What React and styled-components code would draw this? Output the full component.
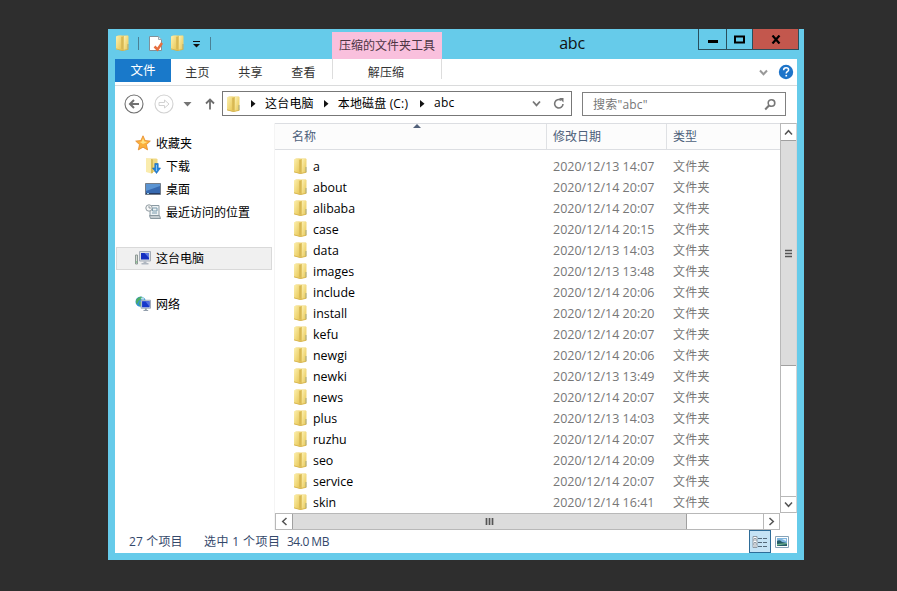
import React from "react";
import styled, { createGlobalStyle } from "styled-components";

const GlobalStyle = createGlobalStyle`
  * {
    box-sizing: border-box;
  }

  body {
    margin: 0;
    background: #2e2e2e;
    font-family: "Open Sans", "Noto Sans CJK SC", sans-serif;
    font-size: 12px;
    color: #111;
    overflow: hidden;
  }

  svg {
    display: block;
    flex-shrink: 0;
  }
`;

const Desktop = styled.div`
  height: 591px;
  padding: 29px 93px 31px 108px;
`;

const Window = styled.div`
  height: 531px;
  padding: 0 7px 7px;
  background: #66cbea;
  display: flex;
  flex-direction: column;
`;

const TitleBar = styled.div`
  height: 30px;
  display: flex;
  margin-right: -2px;
`;

const QuickAccess = styled.div`
  width: 217px;
  display: flex;
  align-items: center;
  padding-bottom: 2px;
`;

const Line = styled.div`
  width: 1px;
  height: 13px;
  background: #4a8196;
  margin: 0 ${(props) => props.$right || 0}px 0 ${(props) => props.$left}px;
`;

const Spacer = styled.div`
  width: ${(props) => props.$width}px;
  flex-shrink: 0;
`;

const ContextTab = styled.div`
  width: 110px;
  height: 27px;
  margin-top: 3px;
  line-height: 27px;
  background: #f9c0dd;
  color: #4d3544;
  text-align: center;
`;

const Title = styled.div`
  width: 256px;
  padding-left: 4px;
  line-height: 29px;
  font-size: 16px;
  text-align: center;
  letter-spacing: -0.2px;
`;

const WindowButton = styled.div`
  width: ${(props) => props.$width}px;
  height: 21px;
  border: 1px solid #294f5d;
  border-top: none;
  border-left-width: ${(props) => (props.$first ? 1 : 0)}px;
  background: ${(props) => props.$color || "transparent"};
  display: flex;
  align-items: center;
  justify-content: center;
`;

const Client = styled.div`
  height: 494px;
  background: #fff;
  display: flex;
  flex-direction: column;
`;

const Ribbon = styled.div`
  height: 27px;
  border-bottom: 1px solid #dadbdc;
  display: flex;
`;

const FileTab = styled.div`
  width: 56px;
  height: 23px;
  line-height: 23px;
  background: #1979ca;
  color: #fff;
  text-align: center;
  font-size: 12.5px;
`;

const Tab = styled.div`
  width: 53px;
  line-height: 27px;
  text-align: center;
  color: #333;
  letter-spacing: 0.2px;
`;

const ContextRibbonTab = styled(Tab)`
  width: 110px;
  height: 20px;
  margin-left: 2px;
  padding-right: 2px;
  border: 1px solid #ddd;
  border-top: none;
  border-bottom: none;
`;

const RibbonTools = styled.div`
  margin-left: auto;
  padding-right: 3px;
  display: flex;
  align-items: center;
  gap: 10px;
`;

const AddressRow = styled.div`
  height: 37px;
  padding-left: 9px;
  padding-bottom: 1px;
  display: flex;
  align-items: center;
`;

const AddressBar = styled.div`
  width: 350px;
  height: 25px;
  margin: 0 10px 1px 5px;
  border: 1px solid #777;
  padding: 0 6px 0 3px;
  display: flex;
  align-items: center;
  color: #000;
`;

const Crumb = styled.span`
  padding: 0 ${(props) => props.$right || 10}px 2px 9px;
  white-space: nowrap;
  letter-spacing: ${(props) => props.$spacing || 0}px;
`;

const SearchBox = styled.div`
  width: 204px;
  height: 24px;
  padding: 0 8px 0 10px;
  border: 1px solid #808080;
  color: #777;
  display: flex;
  align-items: center;
  justify-content: space-between;
`;

const SearchText = styled.span`
  padding-bottom: 1px;
  letter-spacing: 0.2px;
`;

const Main = styled.div`
  height: 407px;
  display: flex;
`;

const Sidebar = styled.div`
  width: 160px;
  padding-top: 9px;
  border-right: 1px solid #f4f4f4;
`;

const NavItem = styled.div`
  height: 23px;
  margin: 0 2px 0 1px;
  margin-bottom: ${(props) => (props.$last ? 23 : 0)}px;
  padding-left: ${(props) => (props.$child ? 28 : 18)}px;
  padding-bottom: 1px;
  border: 1px solid ${(props) => (props.$selected ? "#d9d9d9" : "transparent")};
  background: ${(props) => (props.$selected ? "#f0f0f0" : "transparent")};
  color: #000;
  display: flex;
  align-items: center;
  gap: 5px;
  white-space: nowrap;
`;

const Content = styled.div`
  width: 505px;
`;

const Header = styled.div`
  height: 27px;
  border: 1px solid #dcdee2;
  border-left: none;
  border-right: none;
  background: #fcfcfc;
  color: #4c607a;
  display: flex;
`;

const HeaderCell = styled.div`
  width: ${(props) => props.$width}px;
  padding-left: ${(props) => props.$pad}px;
  line-height: 26px;
  border-right: ${(props) => (props.$last ? "none" : "1px solid #dfe1e4")};
  display: flex;
`;

const SortMark = styled.svg`
  margin-left: 97px;
`;

const FileList = styled.div`
  height: 363px;
  padding-top: 6px;
  overflow: hidden;
`;

const FileRow = styled.div`
  height: 21px;
  padding-left: 18px;
  display: flex;
  align-items: center;
  font-size: 12.5px;
  color: #777;

  svg {
    margin-bottom: 2px;
  }
`;

const FileName = styled.div`
  width: 245px;
  padding-left: 5px;
  font-size: 12.4px;
  color: #000;
`;

const FileDate = styled.div`
  width: 120px;
`;

const FileType = styled.div`
  font-size: 12px;
  letter-spacing: 0.2px;
  padding-bottom: 1px;
`;

const HScroll = styled.div`
  height: 17px;
  border: 1px solid #b8b8b8;
  display: flex;
`;

const VScroll = styled.div`
  width: 17px;
  height: 390px;
  border: 1px solid #b8b8b8;
  border-right-color: #d5d5d5;
`;

const ScrollButton = styled.div`
  width: ${(props) => (props.$h ? 16 : 15)}px;
  height: ${(props) => (props.$h ? 15 : 16)}px;
  margin-left: ${(props) => (props.$h && props.$end ? "auto" : 0)};
  border-left: ${(props) => (props.$h && props.$end ? "1px solid #b8b8b8" : "none")};
  border-top: ${(props) => (!props.$h && props.$end ? "1px solid #b8b8b8" : "none")};
  display: flex;
  align-items: center;
  justify-content: center;
`;

const Thumb = styled.div`
  width: ${(props) => props.$width}px;
  height: ${(props) => props.$height}px;
  margin-bottom: ${(props) => props.$gap || 0}px;
  background: #dcdcdc;
  border: 1px solid #a0a0a0;
  border-width: ${(props) => (props.$h ? "0 1px" : "1px 0")};
  display: flex;
  align-items: center;
  justify-content: center;
`;

const StatusBar = styled.div`
  height: 23px;
  padding-left: 14px;
  display: flex;
  align-items: center;
  color: #34486b;
  white-space: nowrap;
`;

const StatusText = styled.div`
  width: ${(props) => props.$width}px;
  padding-bottom: 1px;
  font-size: 12px;
  letter-spacing: ${(props) => props.$spacing || 0}px;
`;

const ViewButtons = styled.div`
  margin-left: auto;
  padding-right: 8px;
  display: flex;
  align-items: center;
  gap: 5px;
`;

const DetailsButton = styled.div`
  width: 22px;
  height: 23px;
  margin-right: -1px;
  border: 1px solid #2e6c98;
  background: #c5e3f5;
  display: flex;
  align-items: center;
  justify-content: center;
`;

const FolderIcon = () => (
  <svg width="15" height="18" viewBox="0 0 15 18">
    <defs>
      <linearGradient id="folderFront" x1="0" y1="0" x2="1" y2="1">
        <stop offset="0" stopColor="#fcf0b0" />
        <stop offset="1" stopColor="#e8c755" />
      </linearGradient>
    </defs>
    <path d="M1.500 3Q1.500 1.500 3 1.500h9.500q1 0 1 1V15l-5 1.500-7-1z" fill="#efd67a" />
    <path d="M1 3Q1 2 2 2l4.500-.5v15L1 15z" fill="url(#folderFront)" />
    <path d="M6.500 2.500L9 2v14.500H6.500z" fill="#e2c563" />
    <path d="M7 3v12.500" stroke="#c9a53f" strokeWidth=".8" />
    <path d="M9 2l4-.2V15.500L9 16.500z" fill="url(#folderFront)" />
    <path d="M13 10v5" stroke="#939d80" strokeWidth=".8" />
    <path d="M1 14.800l6 1.800 6.500-1.300" fill="none" stroke="#cfab43" strokeWidth=".7" />
  </svg>
);

const PropertiesIcon = () => (
  <svg width="16" height="17" viewBox="0 0 16 17">
    <path d="M1.500 1.500h9l3 3v11h-12z" fill="#fff" stroke="#819099" />
    <path d="M10.500 1.500v3h3" fill="#dfe7eb" stroke="#9aa8b0" />
    <path d="M6.500 11.500l3 3 4.500-6.500" fill="none" stroke="#e66e3f" strokeWidth="2.500" />
  </svg>
);

const CustomizeIcon = () => (
  <svg width="9" height="9" viewBox="0 0 9 9">
    <path d="M1 2.500h7" stroke="#111" />
    <path d="M1 5h7L4.500 8.500z" fill="#111" />
  </svg>
);

const Chevron = ({ turn = 0, color = "#555", size = 9, weight = 1.5 }) => (
  <svg width={size} height={size} viewBox="0 0 9 9">
    <path
      d="M1 2.500l3.500 3.800L8 2.500"
      fill="none"
      stroke={color}
      strokeWidth={weight}
      transform={`rotate(${turn} 4.5 4.5)`}
    />
  </svg>
);

const HelpIcon = () => (
  <svg width="16" height="16" viewBox="0 0 16 16">
    <circle cx="8" cy="8" r="7.200" fill="#1d74c9" />
    <path
      d="M5.600 6.200q0-2.400 2.500-2.400t2.500 2.100c0 1.500-2.400 1.700-2.400 3.700"
      fill="none"
      stroke="#fff"
      strokeWidth="1.500"
    />
    <path d="M7.400 10.900h1.700v1.600H7.400z" fill="#fff" />
  </svg>
);

const ArrowCircle = ({ color, forward, weight }) => (
  <svg width="20" height="20" viewBox="0 0 20 20">
    <circle cx="10" cy="10" r="9" fill="none" stroke={color} strokeWidth="1.100" />
    {forward ? (
      <path
        d="M5 8.500h5.500V6l4.500 4-4.500 4v-2.500H5z"
        fill="none"
        stroke={color}
        strokeWidth={weight}
      />
    ) : (
      <path
        d="M15 10H6.500M10 6l-4 4 4 4"
        fill="none"
        stroke={color}
        strokeWidth={weight}
      />
    )}
  </svg>
);

// caret and up arrow between the round buttons and the address bar
const HistoryIcons = () => (
  <svg width="43" height="20" viewBox="0 0 43 20">
    <path d="M9.500 8h8l-4 4.500z" fill="#757575" />
    <path d="M36 15.500V5.500M32 9.500l4-4 4 4" fill="none" stroke="#6e6e6e" strokeWidth="1.800" />
  </svg>
);

const CrumbArrow = () => (
  <svg width="5" height="8" viewBox="0 0 5 8">
    <path d="M0 0l4.500 3.800L0 7.500z" fill="#111" />
  </svg>
);

const AddressTools = styled.div`
  margin-left: auto;
  display: flex;
  align-items: center;
  gap: 12px;
`;

const RefreshIcon = () => (
  <svg width="12" height="13" viewBox="0 0 12 13">
    <path d="M8 3.200A4.200 4.200 0 1 0 10 7" fill="none" stroke="#777" strokeWidth="1.600" />
    <path d="M6 1h4.500v4.500z" fill="#777" />
  </svg>
);

const SearchIcon = () => (
  <svg width="13" height="13" viewBox="0 0 13 13">
    <circle cx="7.500" cy="5" r="3.300" fill="none" stroke="#777" strokeWidth="1.600" />
    <path d="M5.200 7.300L1.200 11.500" stroke="#777" strokeWidth="2" />
  </svg>
);

const StarIcon = () => (
  <svg width="16" height="16" viewBox="0 0 16 16">
    <path
      d="M8 .8l2.100 4.700 5.200.6-3.900 3.500 1.200 5.300L8 12.200l-4.700 2.700 1.200-5.300L.7 6.100l5.200-.6z"
      fill="#fbb03c"
      stroke="#e58a2c"
      strokeWidth=".8"
    />
    <path d="M8 3l1.300 3.500 3 .5L8 9 4.800 7l2-.6z" fill="#ffe287" />
  </svg>
);

const DownloadIcon = () => (
  <svg width="16" height="18" viewBox="0 0 16 18">
    <path d="M1 1.500h10.500l1 1V15H1z" fill="#f1da84" />
    <path d="M1 1.500l5 .5v14.500L1 15z" fill="#faecad" />
    <path d="M6 2l2 .5V16l-2 .5z" fill="#d9be5b" />
    <path d="M9.800 6.500h3.400V11H15.500L11.500 16.500 7.500 11h2.300z" fill="#2684dc" stroke="#1766b4" strokeWidth=".6" />
    <path d="M11.500 8v6" stroke="#83c4f7" />
  </svg>
);

const DesktopIcon = () => (
  <svg width="16" height="14" viewBox="0 0 16 14">
    <path d="M.5 1.500h15v11H.5z" fill="#3769b0" stroke="#747d89" />
    <path d="M1 2h14v2L1 9z" fill="#5b94d2" />
    <path d="M1 11.500h14" stroke="#263a61" />
    <path d="M2 11.500h2" stroke="#9bd0ec" />
  </svg>
);

const RecentIcon = () => (
  <svg width="16" height="16" viewBox="0 0 16 16">
    <path d="M5 1.500h9v10H5z" fill="#edf2f4" stroke="#8b9aa3" />
    <path d="M7.500 4h4.500v3H7.500zM7 9h5" fill="none" stroke="#7a9bad" />
    <path d="M4.500 11.500h10l1 3H5.500z" fill="#c4ccd0" stroke="#89979f" />
    <circle cx="4" cy="4" r="3.200" fill="#f7f8f8" stroke="#909ba1" />
    <path d="M4 2v2h2" fill="none" stroke="#7b878e" strokeWidth=".8" />
  </svg>
);

const ComputerIcon = () => (
  <svg width="16" height="16" viewBox="0 0 16 16">
    <path d="M.5 5h2v9h-2z" fill="#d3d9d3" stroke="#8e9995" />
    <path d="M4.500 1.500h11v9.500h-11z" fill="#d9dfe5" stroke="#a5adb7" />
    <path d="M6 3h8v6.500H6z" fill="#142fc0" />
    <path d="M9.500 3H14v5z" fill="#5b78e2" />
    <path d="M8.500 11.500h3V13h2v1.500H6.500V13h2z" fill="#aeb6bf" />
    <path d="M1 12h1" stroke="#55bb60" />
  </svg>
);

const NetworkIcon = () => (
  <svg width="16" height="16" viewBox="0 0 17 17">
    <circle cx="6" cy="6" r="5.500" fill="#3192d3" />
    <path d="M2 3q3-3 6-2L6 4 4 5 2 9Q0 6 2 3zM5 6l3 1-2 4-2-2z" fill="#4dae62" />
    <path d="M6 2l3-1 1 3H7z" fill="#b8e1ee" />
    <path d="M6.500 4.500h10v8.500h-10z" fill="#dfe4ec" stroke="#9ca8b8" />
    <path d="M7.500 5.500h8V12h-8z" fill="#1737cb" />
    <path d="M11 5.500h4.500v6z" fill="#536fdf" />
    <path d="M10.500 13h2v2h1.500v1H9v-1h1.500z" fill="#929eab" />
  </svg>
);

const GripIcon = ({ vertical }) => (
  <svg width="9" height="9" viewBox="0 0 9 9">
    <path
      d="M1 1.500h7M1 4.500h7M1 7.500h7"
      stroke="#555"
      strokeWidth="1.700"
      transform={vertical ? "rotate(90 4.5 4.5)" : undefined}
    />
  </svg>
);

const DetailsIcon = () => (
  <svg width="16" height="14" viewBox="0 0 16 14">
    <path d="M1 1.500h4v11H1zM1 5h4M1 9h4" fill="#fff" stroke="#7c8790" strokeWidth=".8" />
    <path d="M2.500 3.500h1M2.500 7.500h1M2.500 11h1" stroke="#253c50" />
    <path d="M6 3.500h4M11 3.500h4M6 7.500h4M11 7.500h4M6 11.500h4M11 11.500h4" stroke="#55697a" />
  </svg>
);

const ThumbnailIcon = () => (
  <svg width="14" height="12" viewBox="0 0 14 12">
    <path d="M.5.500h13v11H.5z" fill="#fff" stroke="#87a3b8" />
    <path d="M2 2h10v8H2z" fill="#7fb6df" />
    <path d="M2 5q3-2 5 1l5 1v3H2z" fill="#245c68" />
    <path d="M2 8l10-1v1L2 9.500z" fill="#73b790" />
    <path d="M7 3h4v2z" fill="#e5f1fa" />
  </svg>
);

const files = [
  { name: "a", date: "2020/12/13 14:07" },
  { name: "about", date: "2020/12/14 20:07" },
  { name: "alibaba", date: "2020/12/14 20:07" },
  { name: "case", date: "2020/12/14 20:15" },
  { name: "data", date: "2020/12/13 14:03" },
  { name: "images", date: "2020/12/13 13:48" },
  { name: "include", date: "2020/12/14 20:06" },
  { name: "install", date: "2020/12/14 20:20" },
  { name: "kefu", date: "2020/12/14 20:07" },
  { name: "newgi", date: "2020/12/14 20:06" },
  { name: "newki", date: "2020/12/13 13:49" },
  { name: "news", date: "2020/12/14 20:07" },
  { name: "plus", date: "2020/12/13 14:03" },
  { name: "ruzhu", date: "2020/12/14 20:07" },
  { name: "seo", date: "2020/12/14 20:09" },
  { name: "service", date: "2020/12/14 20:07" },
  { name: "skin", date: "2020/12/14 16:41" },
];

const navItems = [
  { title: "收藏夹", icon: <StarIcon /> },
  { title: "下载", icon: <DownloadIcon />, child: true },
  { title: "桌面", icon: <DesktopIcon />, child: true },
  { title: "最近访问的位置", icon: <RecentIcon />, child: true, last: true },
  { title: "这台电脑", icon: <ComputerIcon />, selected: true, last: true },
  { title: "网络", icon: <NetworkIcon /> },
];

const WindowTitle = () => (
  <TitleBar>
    <QuickAccess>
      <FolderIcon />
      <Line $left={8} $right={9} />
      <PropertiesIcon />
      <Spacer $width={6} />
      <FolderIcon />
      <Spacer $width={7} />
      <CustomizeIcon />
      <Line $left={9} />
    </QuickAccess>
    <ContextTab>压缩的文件夹工具</ContextTab>
    <Title>abc</Title>
    <WindowButton $width={29} $first>
      <svg width="12" height="12" viewBox="0 0 12 12">
        <path d="M1 7h10v3H1z" fill="#000" />
      </svg>
    </WindowButton>
    <WindowButton $width={26}>
      <svg width="11" height="9" viewBox="0 0 11 9">
        <path d="M1 1.500h9v6H1z" fill="none" stroke="#000" strokeWidth="2" />
      </svg>
    </WindowButton>
    <WindowButton $width={46} $color="#c3574d">
      <svg width="10" height="9" viewBox="0 0 10 9">
        <path d="M1.500 .5l7 8M8.500 .5l-7 8" stroke="#000" strokeWidth="2.200" />
      </svg>
    </WindowButton>
  </TitleBar>
);

const App = () => {
  return (
    <Desktop>
      <GlobalStyle />
      <Window>
        <WindowTitle />
        <Client>
          <Ribbon>
            <FileTab>文件</FileTab>
            <Tab>主页</Tab>
            <Tab>共享</Tab>
            <Tab>查看</Tab>
            <ContextRibbonTab>解压缩</ContextRibbonTab>
            <RibbonTools>
              <Chevron color="#999" weight={2} />
              <HelpIcon />
            </RibbonTools>
          </Ribbon>
          <AddressRow>
            <ArrowCircle color="#717171" weight={2} />
            <Spacer $width={10} />
            <ArrowCircle color="#d2d2d2" weight={1} forward />
            <HistoryIcons />
            <AddressBar>
              <FolderIcon />
              <Spacer $width={10} />
              <CrumbArrow />
              <Crumb $spacing={0.2}>这台电脑</Crumb>
              <CrumbArrow />
              <Crumb $spacing={0.15} $right={12}>
                本地磁盘 (C:)
              </Crumb>
              <CrumbArrow />
              <Crumb $spacing={0.2}>abc</Crumb>
              <AddressTools>
                <Chevron color="#777" weight={1.8} />
                <RefreshIcon />
              </AddressTools>
            </AddressBar>
            <SearchBox>
              <SearchText>搜索"abc"</SearchText>
              <SearchIcon />
            </SearchBox>
          </AddressRow>
          <Main>
            <Sidebar>
              {navItems.map((item) => (
                <NavItem
                  key={item.title}
                  $child={item.child}
                  $last={item.last}
                  $selected={item.selected}
                >
                  {item.icon}
                  {item.title}
                </NavItem>
              ))}
            </Sidebar>
            <Content>
              <Header>
                <HeaderCell $width={272} $pad={17}>
                  名称
                  <SortMark width="8" height="5" viewBox="0 0 8 5">
                    <path d="M4 0l4 4H0z" fill="#52617a" />
                  </SortMark>
                </HeaderCell>
                <HeaderCell $width={120} $pad={6}>
                  修改日期
                </HeaderCell>
                <HeaderCell $width={113} $pad={6} $last>
                  类型
                </HeaderCell>
              </Header>
              <FileList>
                {files.map((file) => (
                  <FileRow key={file.name}>
                    <FolderIcon />
                    <FileName>{file.name}</FileName>
                    <FileDate>{file.date}</FileDate>
                    <FileType>文件夹</FileType>
                  </FileRow>
                ))}
              </FileList>
              <HScroll>
                <ScrollButton $h>
                  <Chevron turn={90} />
                </ScrollButton>
                <Thumb $h $width={395} $height={15}>
                  <GripIcon vertical />
                </Thumb>
                <ScrollButton $h $end>
                  <Chevron turn={-90} />
                </ScrollButton>
              </HScroll>
            </Content>
            <VScroll>
              <ScrollButton>
                <Chevron turn={180} />
              </ScrollButton>
              <Thumb $width={15} $height={226} $gap={130}>
                <GripIcon />
              </Thumb>
              <ScrollButton $end>
                <Chevron />
              </ScrollButton>
            </VScroll>
          </Main>
          <StatusBar>
            <StatusText $width={75} $spacing={0.15}>27 个项目</StatusText>
            <StatusText $width={83} $spacing={0.4}>选中 1 个项目</StatusText>
            <StatusText $width={60} $spacing={-0.5}>34.0 MB</StatusText>
            <ViewButtons>
              <DetailsButton>
                <DetailsIcon />
              </DetailsButton>
              <ThumbnailIcon />
            </ViewButtons>
          </StatusBar>
        </Client>
      </Window>
    </Desktop>
  );
};

export default App;
